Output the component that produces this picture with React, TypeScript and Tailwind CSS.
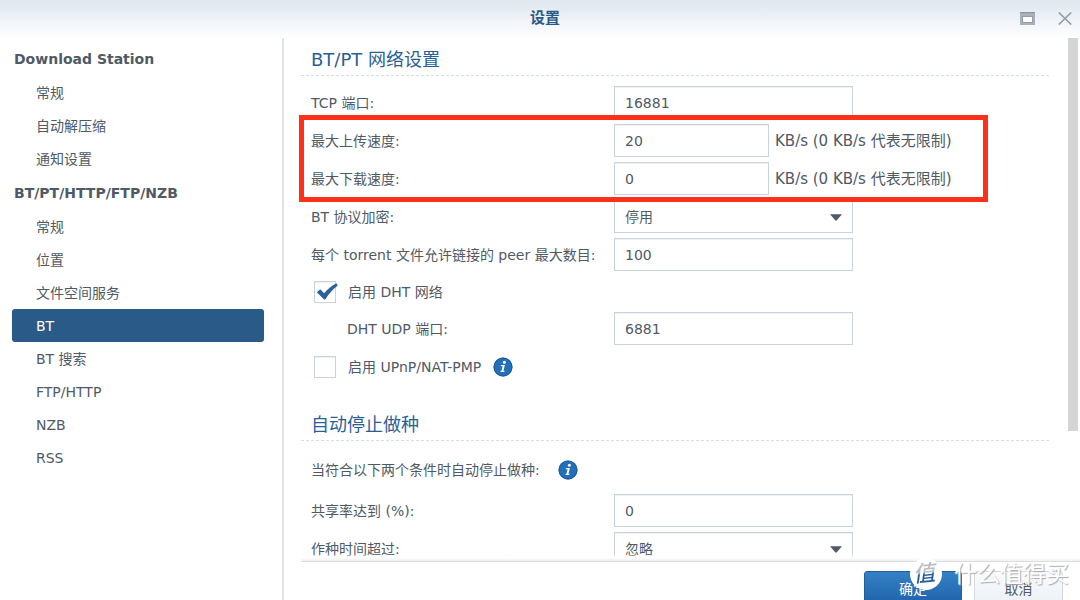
import { useState } from 'react';
import type { ReactNode } from 'react';

interface IGroup {
  title: string;
  items: { id: string; label: string }[];
}

const groups: IGroup[] = [
  {
    title: 'Download Station',
    items: [
      { id: 'general', label: '常规' },
      { id: 'unzip', label: '自动解压缩' },
      { id: 'notify', label: '通知设置' },
    ],
  },
  {
    title: 'BT/PT/HTTP/FTP/NZB',
    items: [
      { id: 'bt-general', label: '常规' },
      { id: 'location', label: '位置' },
      { id: 'file-hosting', label: '文件空间服务' },
      { id: 'bt', label: 'BT' },
      { id: 'bt-search', label: 'BT 搜索' },
      { id: 'ftp', label: 'FTP/HTTP' },
      { id: 'nzb', label: 'NZB' },
      { id: 'rss', label: 'RSS' },
    ],
  },
];

const fieldClass =
  'h-[33px] border border-[#c8d3de] bg-white pl-[10px] text-[#505a64] shadow-[inset_0_1px_1px_#eef1f4] outline-none';

function Row({ id, label, indent, children }: { id: string; label: string; indent?: boolean; children: ReactNode }) {
  return (
    <div className="flex items-center">
      <label htmlFor={id} className={`w-[303px] shrink-0 whitespace-nowrap ${indent ? 'pl-9' : ''}`}>
        {label}
      </label>
      {children}
    </div>
  );
}

function TextField({ id, value, short }: { id: string; value: string; short?: boolean }) {
  return (
    <input
      id={id}
      type="text"
      defaultValue={value}
      className={`${fieldClass} ${short ? 'w-[155px]' : 'w-[239px]'}`}
    />
  );
}

function SpeedHint() {
  return <span className="ml-[6px] text-[15px] whitespace-nowrap">KB/s (0 KB/s 代表无限制)</span>;
}

function SelectField({ id, options }: { id: string; options: string[] }) {
  return (
    <div className="relative">
      <select id={id} className={`${fieldClass} w-[239px] appearance-none`}>
        {options.map((o) => (
          <option key={o}>{o}</option>
        ))}
      </select>
      <svg viewBox="0 0 12 7" className="pointer-events-none absolute top-[14px] right-[11px] h-[7px] w-3 fill-[#505a64]">
        <path d="M0 0.3h12L6.8 6.3q-.8.7-1.6 0z" />
      </svg>
    </div>
  );
}

function Checkbox({ id, label, checked }: { id: string; label: string; checked?: boolean }) {
  const [on, setOn] = useState(!!checked);
  return (
    <>
      <span className="relative ml-[3px] flex">
        <input
          id={id}
          type="checkbox"
          checked={on}
          onChange={(e) => setOn(e.target.checked)}
          className="h-[22px] w-[22px] appearance-none border border-[#c8d3de] bg-white shadow-[inset_0_1px_1px_#eef1f4]"
        />
        {on && (
          <svg viewBox="0 0 22 18" className="pointer-events-none absolute top-[2px] left-[2px] h-[18px] w-[22px]">
            <path d="M0.8 9.2 4.2 6.2 8.2 10.2C11.4 6.2 15.6 2.6 20.4 0.2L21.8 2.4C17.2 5.8 13 10.4 9.6 16Q8.6 17.2 7.6 16Z" fill="#2a609c" />
          </svg>
        )}
      </span>
      <label htmlFor={id} className="ml-3">
        {label}
      </label>
    </>
  );
}

function InfoIcon() {
  return (
    <svg viewBox="0 0 20 20" className="h-5 w-5 shrink-0">
      <circle cx="10" cy="10" r="9.5" fill="#2470b8" />
      <circle cx="10" cy="10" r="9" fill="none" stroke="#1c5c9c" />
      <circle cx="11.4" cy="5.3" r="1.5" fill="#fff" />
      <path d="M8 8.1h3.9l-1.5 5.6h1.2l-.3 1.2H7.4l.3-1.2h.8l1.1-4.4H7.7z" fill="#fff" />
    </svg>
  );
}

function SectionTitle({ children }: { children: ReactNode }) {
  return (
    <h2 className="h-8 border-b border-dashed border-[#d3dee8] pl-[10px] text-[18px] leading-[31px] text-[#2a5f96]">
      {children}
    </h2>
  );
}

function Watermark() {
  return (
    <div className="pointer-events-none absolute right-[11px] bottom-[10px] flex items-center gap-3">
      <span className="flex h-8 w-8 items-center justify-center rounded-full bg-white">
        <span className="-rotate-6 bg-linear-to-b from-[#b9bcc0] from-45% to-[#285d98] to-50% bg-clip-text pr-1 text-[22px] leading-6 font-medium text-transparent italic">
          值
        </span>
      </span>
      <span className="text-[23px] leading-8 text-white [text-shadow:1px_1px_1px_#a4a8ad]">什么值得买</span>
    </div>
  );
}

export default function App() {
  const [active, setActive] = useState('bt');

  return (
    <div className="relative flex h-screen flex-col overflow-hidden bg-white font-['DejaVu_Sans','Noto_Sans_CJK_SC',sans-serif] text-[14px] leading-5 text-[#505a64]">
      {/* Title bar */}
      <header className="flex h-[38px] shrink-0 items-center bg-linear-to-b from-[#dfe6ef] to-white pr-2 pb-[2px] pl-[70px]">
        <h1 className="flex-1 text-center text-[15px] font-bold text-[#2a5a88]">设置</h1>
        <div className="flex items-center gap-[23px]">
          <button aria-label="最大化">
            <svg viewBox="0 0 15 13" className="h-[13px] w-[15px]">
              <path d="M0 0h15v13H0z" fill="#abb1b9" />
              <path d="M0 0h15v1.2H0z" fill="#8f969f" />
              <path d="M2 4h11v7H2z" fill="#979da6" />
              <path d="M3 5h9v5H3z" fill="#fff" />
            </svg>
          </button>
          <button aria-label="关闭">
            <svg viewBox="0 0 14 13" className="h-[13px] w-[14px]">
              <path d="M.8.5 13.2 12.5M13.2.5.8 12.5" stroke="#969ca4" strokeWidth="1.6" />
            </svg>
          </button>
        </div>
      </header>

      <div className="flex min-h-0 flex-1">
        {/* Sidebar */}
        <nav className="flex w-[284px] shrink-0 flex-col gap-px border-r-2 border-[#e0e1e2] pt-1 pr-[18px] pl-3">
          {groups.map((g) => (
            <div key={g.title}>
              <h3 className="h-[34px] pl-[2px] leading-[34px] font-bold">{g.title}</h3>
              {g.items.map((item) => (
                <button
                  key={item.id}
                  onClick={() => setActive(item.id)}
                  className={`block h-[33px] w-full rounded-[3px] pl-6 text-left ${
                    active === item.id ? 'bg-[#2a5a88] text-white' : ''
                  }`}
                >
                  {item.label}
                </button>
              ))}
            </div>
          ))}
        </nav>

        <main className="flex min-w-0 flex-1 flex-col">
          <div className="relative flex min-h-0 flex-1 overflow-hidden pl-[17px]">
            <form className="mr-[19px] min-w-0 flex-1 pt-[6px]">
              <SectionTitle>BT/PT 网络设置</SectionTitle>
              <div className="flex flex-col gap-[5px] pt-[10px] pl-[10px]">
                <Row id="tcp" label="TCP 端口:">
                  <TextField id="tcp" value="16881" />
                </Row>
                <div className="relative flex flex-col gap-[5px]">
                  <Row id="upload" label="最大上传速度:">
                    <TextField id="upload" value="20" short />
                    <SpeedHint />
                  </Row>
                  <Row id="download" label="最大下载速度:">
                    <TextField id="download" value="0" short />
                    <SpeedHint />
                  </Row>
                  <div className="pointer-events-none absolute -top-[9px] -bottom-[7px] -left-3 z-10 w-[689px] border-[5px] border-[#ff3019]" />
                </div>
                <Row id="encrypt" label="BT 协议加密:">
                  <SelectField id="encrypt" options={['停用', '启用']} />
                </Row>
                <Row id="peers" label="每个 torrent 文件允许链接的 peer 最大数目:">
                  <TextField id="peers" value="100" />
                </Row>
                <div className="flex h-[31px] items-center">
                  <Checkbox id="dht" label="启用 DHT 网络" checked />
                </div>
                <Row id="dht-port" label="DHT UDP 端口:" indent>
                  <TextField id="dht-port" value="6881" />
                </Row>
                <div className="flex h-[33px] items-center gap-3">
                  <div className="flex items-center">
                    <Checkbox id="upnp" label="启用 UPnP/NAT-PMP" />
                  </div>
                  <InfoIcon />
                </div>
              </div>

              <div className="pt-[26px]">
                <SectionTitle>自动停止做种</SectionTitle>
              </div>
              <div className="flex flex-col gap-[5px] pt-[10px] pl-[10px]">
                <div className="flex h-[38px] items-center gap-[18px]">
                  <p>当符合以下两个条件时自动停止做种:</p>
                  <InfoIcon />
                </div>
                <Row id="ratio" label="共享率达到 (%):">
                  <TextField id="ratio" value="0" />
                </Row>
                <Row id="seed-time" label="作种时间超过:">
                  <SelectField id="seed-time" options={['忽略', '1 小时']} />
                </Row>
              </div>
            </form>
            <div className="mr-[2px] h-3/4 w-[10px] shrink-0 bg-[#d4d5d7]" />
            <div className="pointer-events-none absolute right-0 bottom-0 left-[17px] h-2 border-b border-[#dcdddf] bg-linear-to-b from-transparent via-white to-[#f0f0f1]" />
          </div>

          {/* Footer buttons */}
          <footer className="flex h-[38px] shrink-0 justify-end gap-3 overflow-hidden pt-[9px] pr-[17px]">
            <button className="h-9 w-[98px] rounded-[3px] border border-[#1f5f9f] bg-linear-to-b from-[#3480c6] to-[#1f62a8] text-white">
              确定
            </button>
            <button className="h-9 w-[89px] rounded-[3px] border border-[#d0dae4] bg-linear-to-b from-[#f8fafc] to-[#ecf1f7]">
              取消
            </button>
          </footer>
        </main>
      </div>

      <Watermark />
    </div>
  );
}
